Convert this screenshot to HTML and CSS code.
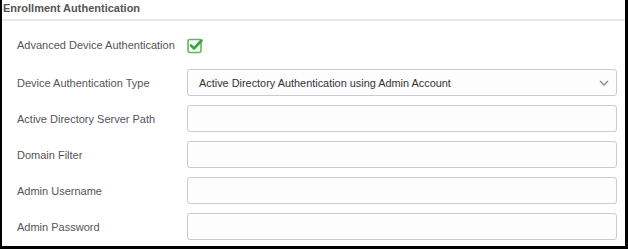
FILE: index.html
```html
<!DOCTYPE html>
<html lang="en">
<head>
	<meta charset="UTF-8">
	<title>Enrollment Authentication</title>
	<link rel="stylesheet" href="styles.css">
</head>
<body>
	<div id="panel">
		<div class="panel-title">Enrollment Authentication</div>
		<form class="form-group">
			<div class="row row-first">
				<label>Advanced Device Authentication</label>
				<span class="check">
					<svg width="17" height="17" viewBox="0 0 17 17">
						<rect x="1" y="2.5" width="13" height="13" rx="2" fill="none" stroke="#5cb85c" stroke-width="1.6"/>
						<path d="M4 8.5 L7 11.5 L14.5 3.5" fill="none" stroke="#3aa53a" stroke-width="2.6" stroke-linecap="round" stroke-linejoin="round"/>
					</svg>
				</span>
			</div>
			<div class="row">
				<label>Device Authentication Type</label>
				<div class="select">
					<span>Active Directory Authentication using Admin Account</span>
					<svg width="10" height="6" viewBox="0 0 10 6"><path d="M1 1 L5 5 L9 1" fill="none" stroke="#888" stroke-width="1.3"/></svg>
				</div>
			</div>
			<div class="row">
				<label>Active Directory Server Path</label>
				<input type="text" class="input">
			</div>
			<div class="row">
				<label>Domain Filter</label>
				<input type="text" class="input">
			</div>
			<div class="row">
				<label>Admin Username</label>
				<input type="text" class="input">
			</div>
			<div class="row">
				<label>Admin Password</label>
				<input type="password" class="input">
			</div>
		</form>
	</div>
</body>
</html>
```

FILE: styles.css
```css
html, body{
	margin: 0;
	padding: 0;
	background: #fff;
}
#panel{
	width: 623px;
	height: 246px;
	border-left: 2px solid #000;
	border-right: 3px solid #000;
	border-bottom: 3px solid #000;
	font-family: "Liberation Sans", Arial, sans-serif;
	color: #555;
	overflow: hidden;
}
.panel-title{
	height: 19px;
	line-height: 17px;
	padding-left: 1px;
	font-size: 11px;
	font-weight: bold;
	color: #555;
	border-bottom: 2px solid #e8e8e8;
}
.form-group{
	padding: 10px 8px 0 15px;
	margin: 0;
}
.row{
	display: flex;
	align-items: center;
	height: 27px;
	margin-bottom: 9px;
}
.row-first{
	height: 28px;
	margin-bottom: 10px;
}
.row label{
	width: 170px;
	font-size: 11px;
	color: #555;
	white-space: nowrap;
}
.check{
	display: flex;
	height: 17px;
}
.select, .input{
	flex: 1;
	box-sizing: border-box;
	height: 27px;
	border: 1px solid #c9ccd3;
	border-radius: 3px;
	background: #fdfdfd;
	margin: 0;
}
.select{
	display: flex;
	align-items: center;
	justify-content: space-between;
	padding: 0 7px 0 11px;
	font-size: 10.9px;
	color: #333;
}
```
